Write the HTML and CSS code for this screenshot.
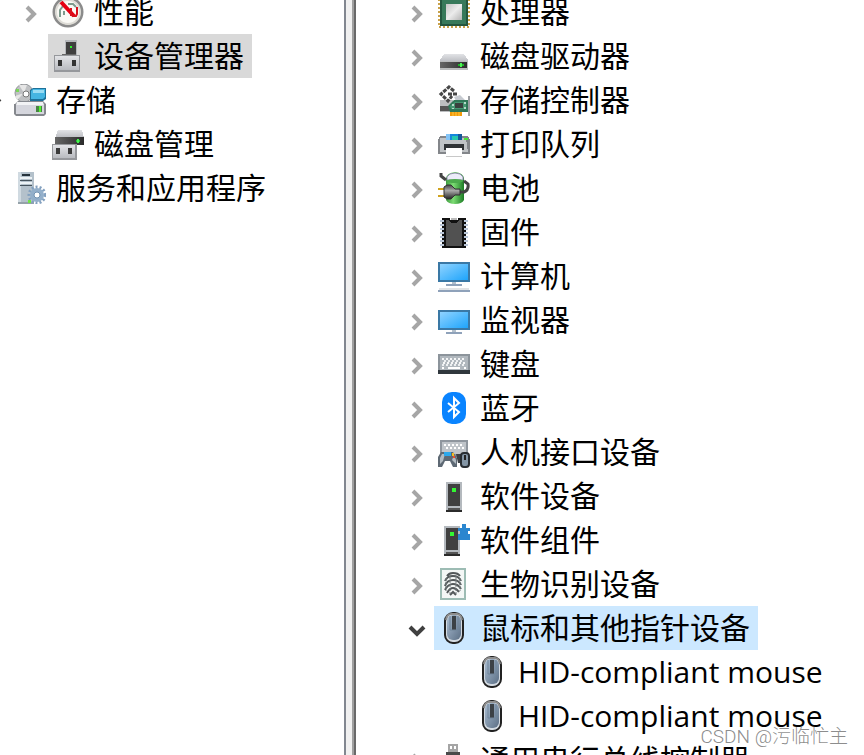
FILE: index.html
```html
<!DOCTYPE html>
<html lang="zh-CN">
<head>
  <meta charset="UTF-8">
  <meta name="viewport" content="width=device-width, initial-scale=1.0">
  <title>设备管理器</title>
  <link rel="stylesheet" href="styles.css">
</head>
<body>

<!-- shared shapes -->
<svg class="defs" width="0" height="0" aria-hidden="true">
  <defs>
    <linearGradient id="silver" x1="0" y1="0" x2="1" y2="1">
      <stop offset="0" stop-color="#c4c4c4"/><stop offset=".5" stop-color="#ececec"/><stop offset="1" stop-color="#b4b4b4"/>
    </linearGradient>
    <linearGradient id="metal" x1="0" y1="0" x2="0" y2="1">
      <stop offset="0" stop-color="#e2e3e6"/><stop offset="1" stop-color="#b9bbc0"/>
    </linearGradient>
    <linearGradient id="screen" x1="0" y1="0" x2="1" y2="1">
      <stop offset="0" stop-color="#8fd3ff"/><stop offset="1" stop-color="#1ea4fb"/>
    </linearGradient>
    <linearGradient id="dark" x1="0" y1="0" x2="1" y2="0">
      <stop offset="0" stop-color="#666"/><stop offset="1" stop-color="#2b2b2b"/>
    </linearGradient>
    <linearGradient id="shell" x1="0" y1="0" x2="1" y2="1">
      <stop offset="0" stop-color="#a9bdd2"/><stop offset="1" stop-color="#5c6f85"/>
    </linearGradient>
    <linearGradient id="green" x1="0" y1="0" x2="1" y2="0">
      <stop offset="0" stop-color="#3e9a3f"/><stop offset=".4" stop-color="#7ddc74"/><stop offset="1" stop-color="#1c7d25"/>
    </linearGradient>
    <linearGradient id="plug" x1="0" y1="0" x2="0" y2="1">
      <stop offset="0" stop-color="#444"/><stop offset=".4" stop-color="#aaa"/><stop offset="1" stop-color="#222"/>
    </linearGradient>
  </defs>
  <symbol id="chevron" viewBox="0 0 16 20">
    <path d="M4 3L11 10L4 17" fill="none" stroke="#a6a6a6" stroke-width="4"/>
  </symbol>
  <symbol id="chevron-down" viewBox="0 0 18 20">
    <path d="M2 7L9 14L16 7" fill="none" stroke="#404040" stroke-width="4"/>
  </symbol>
  <symbol id="mouse" viewBox="0 0 32 32">
    <rect x="7" y="1" width="18" height="30" rx="8" fill="#d4dbe2" stroke="#222" stroke-width="2"/>
    <path d="M8 8Q9 2 13 2H19Q23 2 24 8" fill="none" stroke="#8e8e8e" stroke-width="2"/>
    <rect x="9" y="3" width="14" height="25" rx="6" fill="url(#shell)"/>
    <rect x="14" y="4" width="4" height="14" fill="#3c4146"/>
    <path d="M12 4V18H20V4" fill="none" stroke="#71859a" stroke-width="1"/>
  </symbol>
</svg>

<div class="window">
  <nav class="pane pane-left">
    <ul class="tree">
      <li class="row level-1">
        <button class="toggle" aria-label="展开"><svg width="16" height="20"><use href="#chevron"/></svg></button>
        <span class="item">
          <svg class="icon" viewBox="0 0 32 32">
            <circle cx="16" cy="16" r="14" fill="#faf9f5" stroke="#8b8b8b" stroke-width="3"/>
            <circle cx="16" cy="16" r="12" fill="none" stroke="#dedcd6" stroke-width="2"/>
            <path d="M8 21V14L11 10M12 19V15M16 8H21L24 11" fill="none" stroke="#7d9a8c" stroke-width="2"/>
            <path d="M9 6L22 20" fill="none" stroke="#e60012" stroke-width="4"/>
            <path d="M19 12V20M20 20H24L25 18V11" fill="none" stroke="#d8101c" stroke-width="2"/>
          </svg>
          性能</span>
      </li>
      <li class="row level-1">
        <span class="toggle"></span>
        <span class="item current">
          <svg class="icon" viewBox="0 0 32 32" shape-rendering="crispEdges">
            <rect x="13" y="0" width="12" height="16" fill="#b4b7bb"/>
            <rect x="14" y="2" width="10" height="13" fill="#3f3f3f"/>
            <path d="M10 14H24V16H8Z" fill="#666"/>
            <rect x="18" y="6" width="2" height="2" fill="#2cf42c"/>
            <rect x="2" y="15" width="26" height="17" fill="#96989c"/>
            <rect x="3" y="16" width="24" height="14" fill="url(#metal)"/>
            <path d="M6 20h4v6h-4zM20 20h4v6h-4z" fill="#333"/>
          </svg>
          设备管理器</span>
      </li>
      <li class="row">
        <button class="toggle" aria-label="折叠"><svg width="18" height="20"><use href="#chevron-down"/></svg></button>
        <span class="item">
          <svg class="icon" viewBox="0 0 32 32">
            <circle cx="10" cy="9" r="9" fill="#bfc1c3" stroke="#94979a" stroke-width="1"/>
            <path d="M10 9L5 1L13 1ZM10 9L3 16L1 12Z" fill="#e6e6e6"/>
            <circle cx="12" cy="10" r="3" fill="#fff" stroke="#777" stroke-width="1"/>
            <rect x="2" y="5" width="3" height="3" fill="#79d657"/>
            <path d="M16 6L19 4H32V15L29 17H16Z" fill="#1d7199"/>
            <path d="M17 7L19 5H31V13L29 15H17Z" fill="#45b5e2"/>
            <path d="M19 6H30V9H19Z" fill="#9adcf3"/>
            <path d="M1 20L4 17H29L32 20V30L30 32H2L0 30V20Z" fill="#85888e"/>
            <path d="M3 18H29L30 21H2Z" fill="#f2f3f5"/>
            <rect x="2" y="21" width="28" height="9" fill="#d5d6dd"/>
            <rect x="22" y="22" width="6" height="6" fill="#488543"/>
            <rect x="25" y="22" width="2" height="6" fill="#52f32f"/>
          </svg>
          存储</span>
      </li>
      <li class="row level-1">
        <span class="toggle"></span>
        <span class="item">
          <svg class="icon" viewBox="0 0 32 32" shape-rendering="crispEdges">
            <path d="M6 2H30L32 10H3Z" fill="url(#metal)"/>
            <rect x="3" y="9" width="29" height="8" fill="url(#dark)"/>
            <rect x="24" y="12" width="4" height="2" fill="#20c82c"/>
            <rect x="25" y="11" width="2" height="4" fill="#48f051"/>
            <rect x="0" y="16" width="25" height="16" fill="#96989c"/>
            <rect x="1" y="17" width="22" height="13" fill="url(#metal)"/>
            <path d="M4 20h4v6h-4zM16 20h4v6h-4z" fill="#3b3b3b"/>
          </svg>
          磁盘管理</span>
      </li>
      <li class="row">
        <span class="toggle"></span>
        <span class="item">
          <svg class="icon" viewBox="0 0 32 32">
            <rect x="4" y="0" width="16" height="32" fill="#b4c1cb"/>
            <rect x="4" y="0" width="3" height="32" fill="#d0dae1"/>
            <rect x="8" y="2" width="8" height="2" fill="#26333c"/>
            <path d="M6 8h12v1h-12zM6 13h12v1h-12z" fill="#47545d"/>
            <path d="M6 5h12v2h-12zM6 10h12v2h-12z" fill="#edf3f6"/>
            <rect x="4" y="30" width="16" height="2" fill="#95a2a9"/>
            <circle cx="23" cy="23" r="8" fill="none" stroke="#83a0bf" stroke-width="3" stroke-dasharray="2 2"/>
            <circle cx="23" cy="23" r="5" fill="#eef5fa" stroke="#93afca" stroke-width="4"/>
            <circle cx="23" cy="23" r="3" fill="#fff" stroke="#7393b2" stroke-width="1"/>
            <rect x="14" y="28" width="3" height="3" fill="#71e545"/>
          </svg>
          服务和应用程序</span>
      </li>
    </ul>
  </nav>

  <div class="splitter"></div>

  <main class="pane pane-right">
    <ul class="tree">
      <li class="row">
        <button class="toggle" aria-label="展开"><svg width="16" height="20"><use href="#chevron"/></svg></button>
        <span class="item">
          <svg class="icon" viewBox="0 0 32 32" shape-rendering="crispEdges">
            <rect x="1" y="1" width="30" height="30" fill="none" stroke="#c9a24b" stroke-width="2" stroke-dasharray="2 2"/>
            <rect x="2" y="2" width="28" height="28" fill="#23563f"/>
            <rect x="4" y="4" width="24" height="24" fill="#37795a"/>
            <rect x="8" y="8" width="16" height="16" fill="url(#silver)"/>
          </svg>
          处理器</span>
      </li>
      <li class="row">
        <button class="toggle" aria-label="展开"><svg width="16" height="20"><use href="#chevron"/></svg></button>
        <span class="item">
          <svg class="icon" viewBox="0 0 32 32" shape-rendering="crispEdges">
            <path d="M6 14H26L30 20V22H2V20Z" fill="url(#metal)"/>
            <rect x="2" y="21" width="28" height="9" fill="#babcbd"/>
            <rect x="2" y="22" width="27" height="6" fill="url(#dark)"/>
            <rect x="20" y="24" width="6" height="2" fill="#1fb52a"/>
            <rect x="22" y="23" width="2" height="4" fill="#4bf353"/>
          </svg>
          磁盘驱动器</span>
      </li>
      <li class="row">
        <button class="toggle" aria-label="展开"><svg width="16" height="20"><use href="#chevron"/></svg></button>
        <span class="item">
          <svg class="icon" viewBox="0 0 32 32">
            <path d="M2 16H15V28H2Z" fill="#bcbec0"/>
            <path d="M2 22H14V27H2Z" fill="#555"/>
            <path d="M16 13L22 11L28 17H18Z" fill="#c6cad0"/>
            <path d="M15 6L11 2L3 10L10 17L17 10H11" fill="#fff"/>
            <path d="M16 7L11 3L3 10L10 17L14 12M10 10H19" fill="none" stroke="#474747" stroke-width="3" stroke-dasharray="4 1"/>
            <path d="M10 22L16 16H30V28H12Z" fill="#2f7757"/>
            <path d="M12 22L17 18H28V25H13Z" fill="#469772"/>
            <rect x="17" y="19" width="8" height="5" fill="#39413e"/>
            <path d="M14 20h2v2h-2zM26 18h2v2h-2zM14 24h2v1h-2zM26 23h2v2h-2z" fill="#b4dac9"/>
            <rect x="12" y="28" width="12" height="4" fill="#f39b0b"/>
            <path d="M15 28v4M18 28v4M21 28v4" stroke="#ffc83e" stroke-width="1"/>
            <rect x="30" y="12" width="2" height="20" fill="#9c9fa3"/>
          </svg>
          存储控制器</span>
      </li>
      <li class="row">
        <button class="toggle" aria-label="展开"><svg width="16" height="20"><use href="#chevron"/></svg></button>
        <span class="item">
          <svg class="icon" viewBox="0 0 32 32" shape-rendering="crispEdges">
            <path d="M2 8H30L32 12V26H0V12Z" fill="#83868a"/>
            <path d="M2 10H28L30 24H2Z" fill="#c0c3c6"/>
            <path d="M8 6H24V12H8Z" fill="#1686dc"/>
            <path d="M8 6H12V12H8Z" fill="#83c4f7"/>
            <path d="M14 8H20V12H14Z" fill="#27c7b0"/>
            <path d="M20 6H24V12H20Z" fill="#16599a"/>
            <rect x="26" y="10" width="4" height="2" fill="#45e838"/>
            <rect x="6" y="16" width="20" height="6" fill="#303336"/>
            <rect x="8" y="20" width="16" height="8" fill="#fff"/>
            <path d="M8 28h16v1h-16z" fill="#c8c8c8"/>
          </svg>
          打印队列</span>
      </li>
      <li class="row">
        <button class="toggle" aria-label="展开"><svg width="16" height="20"><use href="#chevron"/></svg></button>
        <span class="item">
          <svg class="icon" viewBox="0 0 32 32">
            <path d="M8 6Q9 1 17 0Q25 1 26 6V28Q24 32 17 32Q10 32 8 28Z" fill="url(#green)"/>
            <path d="M9 8V5Q11 1 17 1Q23 1 25 5V8Z" fill="#ececfa" stroke="#8f8fa8" stroke-width="1"/>
            <ellipse cx="17" cy="9" rx="8" ry="2" fill="#4cab4c"/>
            <path d="M3 1V4L8 8M20 20H26Q31 18 30 12L26 9" fill="none" stroke="#444" stroke-width="3"/>
            <path d="M0 17H7M0 24H7" stroke="#d0a31e" stroke-width="2"/>
            <path d="M6 15L9 13H13L17 17H22V23H17L13 27H9L6 25Z" fill="url(#plug)" stroke="#333" stroke-width="1"/>
          </svg>
          电池</span>
      </li>
      <li class="row">
        <button class="toggle" aria-label="展开"><svg width="16" height="20"><use href="#chevron"/></svg></button>
        <span class="item">
          <svg class="icon" viewBox="0 0 32 32" shape-rendering="crispEdges">
            <path d="M4 2H12V4H20V2H28V32H4Z" fill="#111"/>
            <path d="M4 4V30M28 4V30" stroke="#b9c6d8" stroke-width="4" stroke-dasharray="2 2"/>
            <path d="M8 4H11L13 7H19L21 4H24V30H8Z" fill="#515151"/>
            <path d="M13 2H19V4H13Z" fill="#b9b9b9"/>
          </svg>
          固件</span>
      </li>
      <li class="row">
        <button class="toggle" aria-label="展开"><svg width="16" height="20"><use href="#chevron"/></svg></button>
        <span class="item">
          <svg class="icon" viewBox="0 0 32 32" shape-rendering="crispEdges">
            <rect x="0" y="2" width="32" height="20" fill="#3a78a5"/>
            <rect x="2" y="4" width="28" height="16" fill="url(#screen)"/>
            <rect x="14" y="22" width="4" height="2" fill="#b4c0cc"/>
            <rect x="8" y="24" width="16" height="2" fill="#8fa2ba"/>
            <rect x="1" y="28" width="30" height="2" fill="#e1e3e5"/>
            <rect x="0" y="30" width="32" height="2" fill="#8fa2ba"/>
          </svg>
          计算机</span>
      </li>
      <li class="row">
        <button class="toggle" aria-label="展开"><svg width="16" height="20"><use href="#chevron"/></svg></button>
        <span class="item">
          <svg class="icon" viewBox="0 0 32 32" shape-rendering="crispEdges">
            <rect x="0" y="6" width="32" height="20" fill="#3a78a5"/>
            <rect x="2" y="8" width="28" height="16" fill="url(#screen)"/>
            <rect x="14" y="26" width="4" height="2" fill="#b4c0cc"/>
            <rect x="8" y="28" width="16" height="2" fill="#8fa2ba"/>
          </svg>
          监视器</span>
      </li>
      <li class="row">
        <button class="toggle" aria-label="展开"><svg width="16" height="20"><use href="#chevron"/></svg></button>
        <span class="item">
          <svg class="icon" viewBox="0 0 32 32" shape-rendering="crispEdges">
            <rect x="0" y="6" width="32" height="17" fill="#8c949b"/>
            <rect x="2" y="8" width="28" height="14" fill="#b1b8be"/>
            <path d="M4 11H28M5 15H27" stroke="#f5f6f7" stroke-width="2" stroke-dasharray="2 2"/>
            <path d="M6 13H26M4 17H28" stroke="#eceff1" stroke-width="2" stroke-dasharray="2 2"/>
            <path d="M4 20H6M10 20H22M26 20H28" stroke="#fff" stroke-width="2"/>
            <rect x="0" y="22" width="32" height="4" fill="#30373d"/>
          </svg>
          键盘</span>
      </li>
      <li class="row">
        <button class="toggle" aria-label="展开"><svg width="16" height="20"><use href="#chevron"/></svg></button>
        <span class="item">
          <svg class="icon" viewBox="0 0 32 32">
            <rect x="4" y="0" width="24" height="32" rx="10" fill="#0a84ff"/>
            <path d="M10 11L21 20L16 25V6L21 11L10 20" fill="none" stroke="#fff" stroke-width="2"/>
          </svg>
          蓝牙</span>
      </li>
      <li class="row">
        <button class="toggle" aria-label="展开"><svg width="16" height="20"><use href="#chevron"/></svg></button>
        <span class="item">
          <svg class="icon" viewBox="0 0 32 32">
            <rect x="2" y="4" width="28" height="17" fill="#8f969e"/>
            <rect x="4" y="6" width="24" height="12" fill="#c0c5ca"/>
            <path d="M6 9H26M8 12H26" stroke="#fff" stroke-width="2" stroke-dasharray="2 2"/>
            <path d="M0 31V21L3 16H15L19 22V31H15L12 25H7L4 31Z" fill="#5e6974"/>
            <path d="M2 28V22L4 18H7L5 25ZM16 19L18 24V28L14 24Z" fill="#b2bbc2"/>
            <rect x="6" y="16" width="7" height="4" fill="#2ba8ec"/>
            <rect x="14" y="17" width="2" height="3" fill="#f0bd27"/>
            <rect x="15" y="20" width="2" height="2" fill="#e74f32"/>
            <path d="M18 18H23V27H20Z" fill="#3d4146"/>
            <rect x="23" y="17" width="8" height="14" rx="3" fill="#8496a6" stroke="#292e33" stroke-width="2"/>
            <path d="M27 19V24" stroke="#222" stroke-width="2"/>
          </svg>
          人机接口设备</span>
      </li>
      <li class="row">
        <button class="toggle" aria-label="展开"><svg width="16" height="20"><use href="#chevron"/></svg></button>
        <span class="item">
          <svg class="icon" viewBox="0 0 32 32" shape-rendering="crispEdges">
            <rect x="8" y="2" width="16" height="28" fill="#b4b9be"/>
            <rect x="10" y="4" width="12" height="22" fill="#404040"/>
            <rect x="14" y="8" width="4" height="4" fill="#32f832"/>
            <rect x="8" y="30" width="16" height="2" fill="#2b2b2b"/>
            <rect x="10" y="28" width="12" height="2" fill="#555"/>
          </svg>
          软件设备</span>
      </li>
      <li class="row">
        <button class="toggle" aria-label="展开"><svg width="16" height="20"><use href="#chevron"/></svg></button>
        <span class="item">
          <svg class="icon" viewBox="0 0 32 32" shape-rendering="crispEdges">
            <rect x="6" y="2" width="16" height="28" fill="#b4b9be"/>
            <rect x="8" y="4" width="12" height="22" fill="#404040"/>
            <rect x="12" y="8" width="4" height="4" fill="#32f832"/>
            <rect x="6" y="30" width="16" height="2" fill="#2b2b2b"/>
            <rect x="8" y="28" width="12" height="2" fill="#555"/>
            <path d="M24 0H28V4H32V7H30V10H32V16H20V10H22V7H20V4H24Z" fill="#2a86cf"/>
          </svg>
          软件组件</span>
      </li>
      <li class="row">
        <button class="toggle" aria-label="展开"><svg width="16" height="20"><use href="#chevron"/></svg></button>
        <span class="item">
          <svg class="icon" viewBox="0 0 32 32">
            <rect x="3" y="1" width="24" height="30" fill="#f4f7f6" stroke="#9dbcb4" stroke-width="2"/>
            <path d="M9 8Q11 5 15 5Q20 5 22 8M7 13Q9 8 15 8Q21 8 23 13M7 18Q9 12 15 12Q21 12 23 17M7 22Q10 16 15 16Q20 16 23 21M9 25Q12 20 15 20Q18 20 21 24M12 27L15 24L18 27" fill="none" stroke="#53585a" stroke-width="2"/>
            <path d="M8 10V23M12 8V26M18 8V26M22 10V23" stroke="#777c7e" stroke-width="1" stroke-dasharray="3 1"/>
          </svg>
          生物识别设备</span>
      </li>
      <li class="row">
        <button class="toggle" aria-label="折叠"><svg width="18" height="20"><use href="#chevron-down"/></svg></button>
        <span class="item selected">
          <svg class="icon"><use href="#mouse"/></svg>
          鼠标和其他指针设备</span>
      </li>
      <li class="row level-1">
        <span class="toggle"></span>
        <span class="item">
          <svg class="icon"><use href="#mouse"/></svg>
          HID-compliant mouse</span>
      </li>
      <li class="row level-1">
        <span class="toggle"></span>
        <span class="item">
          <svg class="icon"><use href="#mouse"/></svg>
          HID-compliant mouse</span>
      </li>
      <li class="row">
        <button class="toggle" aria-label="展开"><svg width="16" height="20"><use href="#chevron"/></svg></button>
        <span class="item">
          <svg class="icon" viewBox="0 0 32 32" shape-rendering="crispEdges">
            <rect x="10" y="0" width="10" height="8" fill="#a5a5a5"/>
            <path d="M12 2h2v3h-2zM16 2h2v3h-2z" fill="#fff"/>
            <rect x="8" y="8" width="14" height="18" fill="#4a4a4a"/>
            <rect x="13" y="26" width="4" height="6" fill="#4a4a4a"/>
          </svg>
          通用串行总线控制器</span>
      </li>
    </ul>
  </main>
</div>

<span class="watermark">CSDN @污临忙主</span>

</body>
</html>
```
FILE: styles.css
```css
* {
  box-sizing: border-box;
}

body {
  margin: 0;
  background: #fff;
  color: #000;
  font-family: "Open Sans", "Noto Sans CJK SC", sans-serif;
  font-size: 30px;
  overflow: hidden;
}

.defs {
  position: absolute;
}

.window {
  display: flex;
  height: 100vh;
}

.pane {
  overflow: hidden;
}

.pane-left {
  flex: 0 0 344px;
}

.pane-right {
  flex: 1;
  padding-left: 44px;
}

.splitter {
  flex: 0 0 12px;
  background: #f0f0f0;
  border-left: 2px solid #828790;
  border-right: 2px solid #696969;
  box-shadow: inset -2px 0 #a0a0a0;
}

/* both panes are scrolled a little, so the first row is cut */
.tree {
  list-style: none;
  margin: -10px 0 0;
  padding: 0;
}

.pane-left .tree {
  margin-left: -24px;
}

.row {
  display: flex;
  height: 44px;
  line-height: 44px;
  white-space: nowrap;
}

.level-1 {
  padding-left: 38px;
}

.toggle {
  display: flex;
  flex: 0 0 34px;
  align-items: center;
  justify-content: center;
  padding: 4px 0 0;
  border: none;
  background: none;
}

.item {
  display: flex;
  align-items: center;
  gap: 10px;
  padding: 0 8px 0 4px;
}

.current {
  background: #d9d9d9;
}

.selected {
  background: #cce8ff;
}

.icon {
  flex: none;
  width: 32px;
  height: 32px;
}

.watermark {
  position: absolute;
  right: 16px;
  bottom: 4px;
  font-family: Roboto, "Noto Sans CJK SC", sans-serif;
  font-size: 19px;
  font-weight: 300;
  line-height: 28px;
  color: rgba(110, 110, 110, 0.8);
  text-shadow: 1px 1px 0 rgba(255, 255, 255, 0.7);
}
```
